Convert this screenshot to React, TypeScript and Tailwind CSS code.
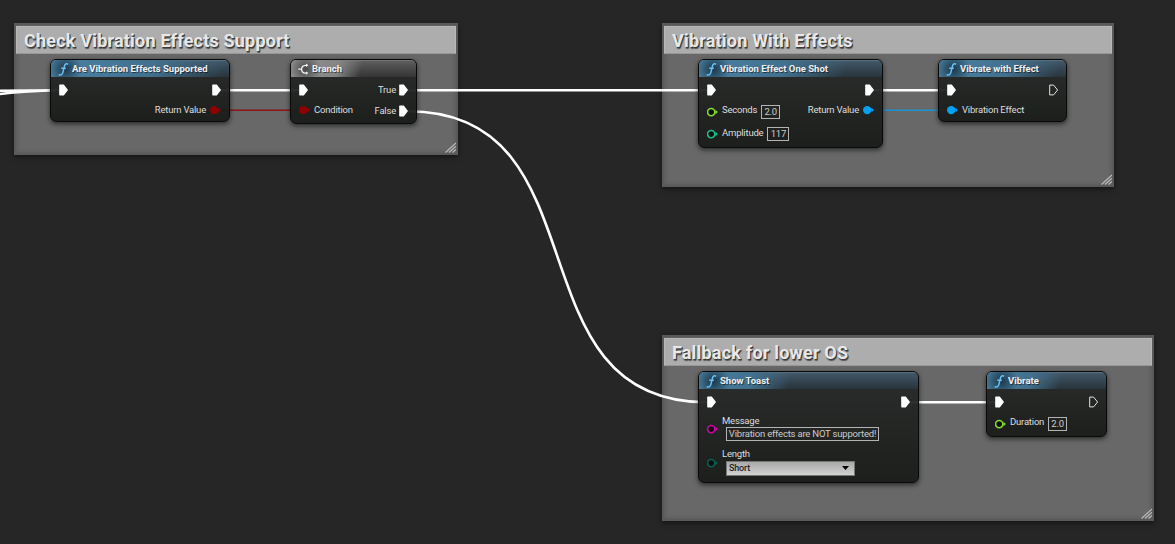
import type { ReactNode } from "react";

function ExecPin({ open = false }: { open?: boolean }) {
  return (
    <svg className="block shrink-0" width="9" height="12" viewBox="0 0 9 12">
      {open ? (
        <path d="M0.7 1.1H4.6L8.6 6L4.6 10.9H0.7Z" fill="none" stroke="#e6e6e6" strokeWidth="1" strokeLinejoin="round" />
      ) : (
        <path d="M0.9 0.6H4.8L9 6L4.8 11.4H0.9Q0.2 11.4 0.2 10.7V1.3Q0.2 0.6 0.9 0.6Z" fill="#fff" />
      )}
    </svg>
  );
}

function DataPin({ color, filled = false }: { color: string; filled?: boolean }) {
  return (
    <svg className="block shrink-0" width="11" height="10" viewBox="0 0 11 10">
      <circle cx="4.2" cy="5.1" r={filled ? 4.2 : 3.6} fill={filled ? color : "#0d100d"} stroke={filled ? "none" : color} strokeWidth="1.6" />
      <path d="M8.4 2.7L10.9 5.1L8.4 7.5Z" fill={color} />
    </svg>
  );
}

function FunctionIcon() {
  return (
    <svg className="block shrink-0" width="11" height="13" viewBox="0 0 11 13">
      <path d="M10.2 1.2C8.3 0.4 7 1 6.5 3L4.8 9.6C4.3 11.5 2.9 12.3 0.7 11.7M3.2 5.2H7.8" fill="none" stroke="#6cc0f5" strokeWidth="1.5" />
    </svg>
  );
}

function BranchIcon() {
  return (
    <svg className="block shrink-0" width="11" height="13" viewBox="0 0 11 13">
      <path d="M0.3 6.2H3.4M8.6 2.3H7.5C5 2.5 3.6 3.9 3.6 6.2S5 9.9 7.5 10.1H8.6" fill="none" stroke="#f2f2f2" strokeWidth="1.3" />
      <path d="M8 0.6L10.4 2.3L8 4ZM8 8.4L10.4 10.1L8 11.8Z" fill="#f2f2f2" />
    </svg>
  );
}

function Label({ children, className = "leading-[12px]" }: { children: ReactNode; className?: string }) {
  return <span className={`whitespace-nowrap text-[9.5px] tracking-[-0.2px] text-[#dedede] ${className}`}>{children}</span>;
}

function ValueBox({ children, className = "" }: { children: ReactNode; className?: string }) {
  return (
    <span className={`flex h-[14px] items-center justify-center whitespace-nowrap border border-[#b4b4b4] text-[9.5px] leading-[12px] tracking-[-0.2px] text-[#cccccc] ${className}`}>
      {children}
    </span>
  );
}

function GraphNode({ title, className, branch = false, children }: { title: string; className: string; branch?: boolean; children: ReactNode }) {
  return (
    <section className={`absolute flex flex-col overflow-hidden rounded-[6px] border border-[#080a09] bg-linear-to-b from-[#272a28]/95 to-[#191b19]/95 shadow-[0_2px_5px_rgba(0,0,0,0.6)] ${className}`}>
      <header
        className={`flex h-[17px] shrink-0 bg-linear-to-b shadow-[inset_0_1px_1px_rgba(255,255,255,0.15)] ${
          branch ? "from-[#606060] to-[#343434]" : "from-[#43596a] to-[#27343c]"
        }`}
      >
        <div
          className={`flex h-[17px] items-center gap-[3px] pl-[7px] pr-[24px] pt-px ${
            branch
              ? "bg-[radial-gradient(circle_at_14px_9px,rgba(50,50,50,0.75)_0,transparent_16px),linear-gradient(105deg,#929292_0,#848484_62%,transparent_92%)]"
              : "bg-[radial-gradient(circle_at_14px_9px,rgba(22,48,66,0.8)_2px,transparent_17px),linear-gradient(105deg,#4c82a4_0,#42708e_55%,transparent_95%)]"
          }`}
        >
          {branch ? <BranchIcon /> : <FunctionIcon />}
          <h3 className="whitespace-nowrap text-[9.5px] font-bold leading-[12px] text-[#f0f0f0] [text-shadow:1px_1px_0_rgba(0,0,0,0.5)]">{title}</h3>
        </div>
      </header>
      <div className="flex grow justify-between px-[8px] pt-[3px]">{children}</div>
    </section>
  );
}

function Comment({ title, className }: { title: string; className: string }) {
  return (
    <section className={`absolute flex flex-col justify-between border-2 border-[#5a5a5a] bg-[#686868] pt-px shadow-[inset_0_0_5px_rgba(0,0,0,0.2),0_2px_5px_rgba(0,0,0,0.5)] ${className}`}>
      <header className="flex h-[28px] items-center border border-[#b8b8b8] border-b-[#989898] bg-[#adadad] pl-[7px] pt-[2px]">
        <h2 className="whitespace-nowrap text-[18px] font-bold leading-[22px] tracking-[0.2px] text-[#e8e8e8] [text-shadow:1px_1px_0_#3a3a3a,1px_2px_1px_#555]">{title}</h2>
      </header>
      <svg className="block self-end" width="11" height="11" viewBox="0 0 11 11">
        <path d="M0.5 10.5L11 1M4 10.5L11 4.2M7.5 10.5L11 7.4" stroke="#bdbdbd" strokeWidth="1.1" fill="none" />
      </svg>
    </section>
  );
}

function Wires() {
  return (
    <svg className="absolute left-0 top-0" width="1175" height="544" viewBox="0 0 1175 544" fill="none">
      <g stroke="#fff" strokeWidth="2.6">
        <path d="M0 90.8Q30 90.3 60 90.3M0 94Q26 91 60 90.3" />
        <path d="M218 90.3H302M407 90.3H710M871 90.3H950M907 402.3H998" />
        <path d="M408 111.3C607 111.3 508 402.3 707 402.3" />
      </g>
      <path d="M216 110.3H303" stroke="#8e1414" strokeWidth="1.6" />
      <path d="M869 110.3H950" stroke="#1a93d4" strokeWidth="1.6" />
    </svg>
  );
}

export default function App() {
  return (
    <main className="relative h-[544px] w-[1175px] overflow-hidden bg-[#262626] font-['Roboto',sans-serif]">
      <Comment title="Check Vibration Effects Support" className="left-[14px] top-[23px] h-[132px] w-[444px]" />
      <Comment title="Vibration With Effects" className="left-[662px] top-[23px] h-[164px] w-[452px]" />
      <Comment title="Fallback for lower OS" className="left-[662px] top-[335px] h-[186px] w-[492px]" />
      <Wires />

      <GraphNode title="Are Vibration Effects Supported" className="left-[50px] top-[59px] h-[63px] w-[180px]">
        <div className="flex h-[20px] items-center"><ExecPin /></div>
        <div className="flex flex-col items-end">
          <div className="flex h-[20px] items-center"><ExecPin /></div>
          <div className="flex h-[20px] items-center gap-[4px]"><Label>Return Value</Label><DataPin color="#930000" filled /></div>
        </div>
      </GraphNode>

      <GraphNode title="Branch" branch className="left-[290px] top-[59px] h-[65px] w-[127px]">
        <div className="flex flex-col">
          <div className="flex h-[20px] items-center"><ExecPin /></div>
          <div className="flex h-[20px] items-center gap-[4px]"><DataPin color="#930000" filled /><Label>Condition</Label></div>
        </div>
        <div className="flex flex-col items-end gap-px">
          <div className="flex h-[20px] items-center gap-[3px]"><Label>True</Label><ExecPin /></div>
          <div className="flex h-[20px] items-center gap-[3px]"><Label>False</Label><ExecPin /></div>
        </div>
      </GraphNode>

      <GraphNode title="Vibration Effect One Shot" className="left-[698px] top-[59px] h-[89px] w-[185px]">
        <div className="flex flex-col">
          <div className="flex h-[20px] items-center"><ExecPin /></div>
          <div className="flex h-[24px] items-center gap-[4px]">
            <DataPin color="#86dc2e" />
            <Label className="pb-[5px] leading-[12px]">Seconds</Label>
            <ValueBox className="w-[19px]">2.0</ValueBox>
          </div>
          <div className="flex h-[20px] items-center gap-[4px]">
            <DataPin color="#1fc08f" />
            <Label className="pb-[2px] leading-[12px]">Amplitude</Label>
            <ValueBox className="w-[22px]">117</ValueBox>
          </div>
        </div>
        <div className="flex flex-col items-end">
          <div className="flex h-[20px] items-center"><ExecPin /></div>
          <div className="flex h-[20px] items-center gap-[4px]"><Label>Return Value</Label><DataPin color="#00a2f5" filled /></div>
        </div>
      </GraphNode>

      <GraphNode title="Vibrate with Effect" className="left-[938px] top-[59px] h-[63px] w-[129px]">
        <div className="flex flex-col">
          <div className="flex h-[20px] items-center"><ExecPin /></div>
          <div className="flex h-[20px] items-center gap-[4px]"><DataPin color="#00a2f5" filled /><Label>Vibration Effect</Label></div>
        </div>
        <div className="flex h-[20px] items-center"><ExecPin open /></div>
      </GraphNode>

      <GraphNode title="Show Toast" className="left-[698px] top-[371px] h-[112px] w-[221px]">
        <div className="flex flex-col">
          <div className="flex h-[20px] items-center"><ExecPin /></div>
          <div className="flex h-[33px] items-center gap-[4px] pt-px">
            <DataPin color="#d400a8" />
            <div className="flex flex-col">
              <Label className="h-[10px] leading-[8px]">Message</Label>
              <ValueBox className="ml-[4px] w-[153px]">Vibration effects are NOT supported!</ValueBox>
            </div>
          </div>
          <div className="flex h-[33px] items-center gap-[4px] pt-[3px]">
            <DataPin color="#0c5f52" />
            <div className="flex flex-col">
              <Label className="h-[10px] leading-[6px]">Length</Label>
              <div className="ml-[4px] flex h-[15px] w-[129px] items-center justify-between border border-[#777] bg-linear-to-b from-[#a9a9a9] to-[#d2d2d2] pl-[2px] pr-[5px]">
                <span className="text-[9px] font-medium leading-[11px] tracking-[-0.2px] text-[#222]">Short</span>
                <svg width="7" height="4" viewBox="0 0 7 4"><path d="M0 0H7L3.5 4Z" fill="#000" /></svg>
              </div>
            </div>
          </div>
        </div>
        <div className="flex h-[20px] items-center"><ExecPin /></div>
      </GraphNode>

      <GraphNode title="Vibrate" className="left-[986px] top-[371px] h-[66px] w-[121px]">
        <div className="flex flex-col">
          <div className="flex h-[20px] items-center"><ExecPin /></div>
          <div className="flex h-[24px] items-center gap-[4px]">
            <DataPin color="#86dc2e" />
            <Label className="pb-[5px] leading-[12px]">Duration</Label>
            <ValueBox className="w-[19px]">2.0</ValueBox>
          </div>
        </div>
        <div className="flex h-[20px] items-center"><ExecPin open /></div>
      </GraphNode>
    </main>
  );
}
